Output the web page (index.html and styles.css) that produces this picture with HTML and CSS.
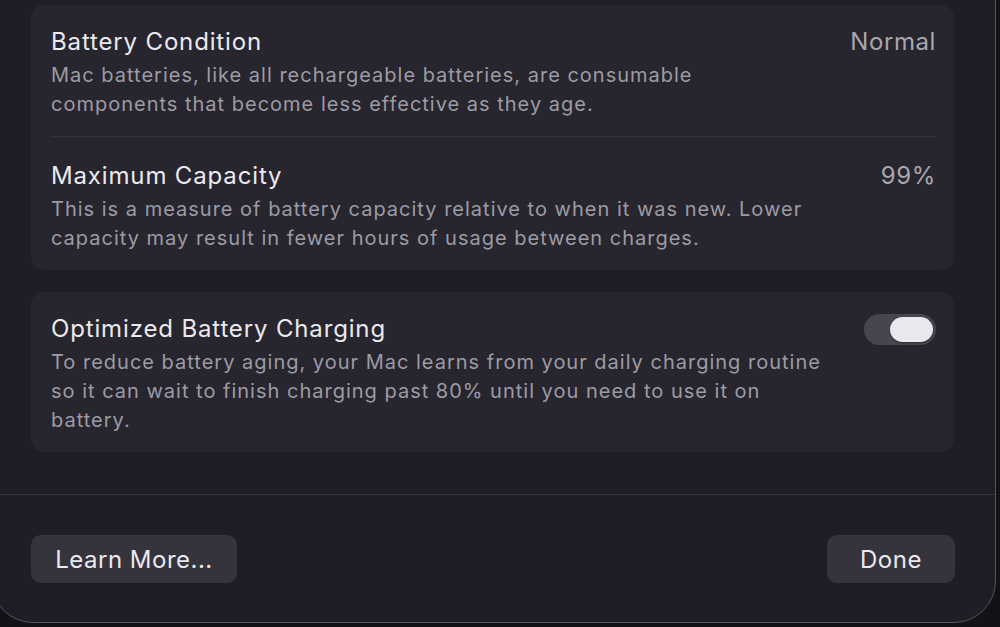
FILE: index.html
```html
<!DOCTYPE html>
<html lang="en">
<head>
  <meta charset="UTF-8" />
  <meta name="viewport" content="width=device-width, initial-scale=1.0"/>
  <title>Battery Health</title>
  <link rel="stylesheet" href="styles.css">
</head>
<body>

  <div class="sheet">
    <div class="content">

      <div class="card">
        <div class="row">
          <div class="text">
            <h2>Battery Condition</h2>
            <p>Mac batteries, like all rechargeable batteries, are consumable components that become less effective as they age.</p>
          </div>
          <div class="value">Normal</div>
        </div>
        <div class="row">
          <div class="text">
            <h2>Maximum Capacity</h2>
            <p>This is a measure of battery capacity relative to when it was new. Lower capacity may result in fewer hours of usage between charges.</p>
          </div>
          <div class="value">99%</div>
        </div>
      </div>

      <div class="card">
        <div class="row">
          <div class="text">
            <h2>Optimized Battery Charging</h2>
            <p>To reduce battery aging, your Mac learns from your daily charging routine so it can wait to finish charging past 80% until you need to use it on battery.</p>
          </div>
          <button class="toggle on" aria-label="Optimized Battery Charging"><span class="knob"></span></button>
        </div>
      </div>

    </div>

    <div class="footer">
      <button class="btn">Learn More...</button>
      <button class="btn">Done</button>
    </div>
  </div>

</body>
</html>
```

FILE: styles.css
```css
* {
  margin: 0;
  padding: 0;
  box-sizing: border-box;
}

body {
  font-family: Inter, 'Noto Sans', sans-serif;
  background: #131217;
  width: 1000px;
  height: 627px;
  overflow: hidden;
  -webkit-font-smoothing: antialiased;
}

.sheet {
  width: 1005px;
  margin-left: -9px;
  margin-top: -40px;
  background: #1f1d26;
  border: 1px solid #55535c;
  border-radius: 0 0 42px 42px;
  height: 663px;
}

.content {
  padding: 44px 41px 42px 39px;
  display: flex;
  flex-direction: column;
  gap: 22px;
  border-bottom: 1px solid #37353e;
}

.card {
  background: #27252e;
  border-radius: 13px;
  padding: 0 18px 0 20px;
}

.row {
  display: flex;
  justify-content: space-between;
  align-items: flex-start;
  gap: 32px;
  padding: 22px 0 17px;
}

.row + .row {
  border-top: 1px solid #34323b;
  padding-top: 24px;
}

.text {
  flex: 1;
}

h2 {
  font-size: 24px;
  font-weight: 400;
  letter-spacing: 0.85px;
  line-height: 30px;
  color: #ebe9ef;
  margin-bottom: 4px;
}

p {
  font-size: 20px;
  letter-spacing: 1px;
  line-height: 29px;
  color: #9d9ba4;
}

.value {
  font-size: 24px;
  letter-spacing: 0.6px;
  line-height: 30px;
  color: #a9a7ae;
}

.toggle {
  flex-shrink: 0;
  width: 72px;
  height: 31px;
  border: none;
  border-radius: 16px;
  background: #47454d;
  padding: 3px;
  display: flex;
  justify-content: flex-end;
  cursor: pointer;
}

.knob {
  width: 43px;
  height: 25px;
  border-radius: 13px;
  background: #e9e8ec;
  box-shadow: 0 1px 2px rgba(0, 0, 0, 0.3);
}

.footer {
  display: flex;
  justify-content: space-between;
  padding: 40px 40px 0 39px;
}

.btn {
  font-family: inherit;
  font-size: 24px;
  letter-spacing: 0.5px;
  color: #ebe9ef;
  background: #35333c;
  border: none;
  border-radius: 10px;
  height: 48px;
  cursor: pointer;
}

.btn:first-child {
  width: 206px;
}

.btn:last-child {
  width: 128px;
}
```
